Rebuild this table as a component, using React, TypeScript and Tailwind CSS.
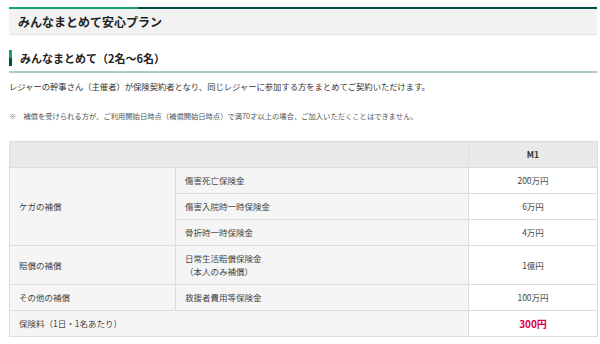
const ROWS_INJURY = [
  { item: "傷害死亡保険金", value: "200万円" },
  { item: "傷害入院時一時保険金", value: "6万円" },
  { item: "骨折時一時保険金", value: "4万円" },
];

const font = { fontFamily: '"Noto Sans CJK JP", "Noto Sans", sans-serif' };

export default function App() {
  const cell = "border border-[#dcdcdc] px-[9px] py-[6px] leading-[13px] align-middle";
  return (
    <div className="h-[344px] w-[600px] bg-white pl-[9px] pr-[3px] pt-[7px] text-[#333]" style={font}>
      {/* top rule */}
      <div className="flex h-[2px]">
        <div className="w-[129px] bg-[#17a26f]" />
        <div className="flex-1 bg-[#004f45]" />
      </div>

      {/* page title */}
      <div className="flex h-[26px] items-center border-b border-[#e2e2e2] bg-[#f2f2f2] px-[9px]">
        <h1 className="text-[12px] font-bold leading-none text-[#222]">みんなまとめて安心プラン</h1>
      </div>

      {/* section heading */}
      <div className="mt-[15px] flex items-center border-b-2 border-[#a9cdc7] pb-[5px]">
        <div className="flex h-[16px] w-[3px] flex-col">
          <div className="flex-1 bg-[#17a26f]" />
          <div className="flex-1 bg-[#004f45]" />
        </div>
        <h2 className="ml-[8px] text-[11px] font-bold leading-none text-[#222]">みんなまとめて（2名〜6名）</h2>
      </div>

      <p className="mt-[7px] text-[8.3px] leading-[12px] text-[#333]">
        レジャーの幹事さん（主催者）が保険契約者となり、同じレジャーに参加する方をまとめてご契約いただけます。
      </p>
      <p className="mt-[18px] text-[7.3px] leading-[12px] text-[#555]">
        <span className="mr-[7px] text-[#777]" style={{ fontFamily: '"Noto Sans CJK JP", "DejaVu Sans", sans-serif' }}>
          {"\u203B\uFE0E"}
        </span>
        補償を受けられる方が、ご利用開始日時点（補償開始日時点）で満70才以上の場合、ご加入いただくことはできません。
      </p>

      {/* coverage table */}
      <table className="mt-[19px] w-[588px] table-fixed border-collapse text-[8.5px] text-[#444]">
        <colgroup>
          <col className="w-[166px]" />
          <col className="w-[293px]" />
          <col className="w-[129px]" />
        </colgroup>
        <thead>
          <tr className="bg-[#e9e9e9]">
            <th className={cell} colSpan={2} />
            <th className={`${cell} text-center font-bold text-[#333]`}>M1</th>
          </tr>
        </thead>
        <tbody>
          {ROWS_INJURY.map((r, i) => (
            <tr key={r.item}>
              {i === 0 && (
                <td className={`${cell} bg-[#f5f5f5]`} rowSpan={3}>
                  ケガの補償
                </td>
              )}
              <td className={`${cell} bg-[#f5f5f5]`}>{r.item}</td>
              <td className={`${cell} bg-white text-center`}>{r.value}</td>
            </tr>
          ))}
          <tr>
            <td className={`${cell} bg-[#f5f5f5]`}>賠償の補償</td>
            <td className={`${cell} bg-[#f5f5f5]`}>
              日常生活賠償保険金
              <br />
              （本人のみ補償）
            </td>
            <td className={`${cell} bg-white text-center`}>1億円</td>
          </tr>
          <tr>
            <td className={`${cell} bg-[#f5f5f5]`}>その他の補償</td>
            <td className={`${cell} bg-[#f5f5f5]`}>救援者費用等保険金</td>
            <td className={`${cell} bg-white text-center`}>100万円</td>
          </tr>
          <tr>
            <td className={`${cell} bg-[#f5f5f5]`} colSpan={2}>
              保険料（1日・1名あたり）
            </td>
            <td className={`${cell} bg-white text-center text-[10px] font-bold text-[#d7004b]`}>300円</td>
          </tr>
        </tbody>
      </table>
    </div>
  );
}
